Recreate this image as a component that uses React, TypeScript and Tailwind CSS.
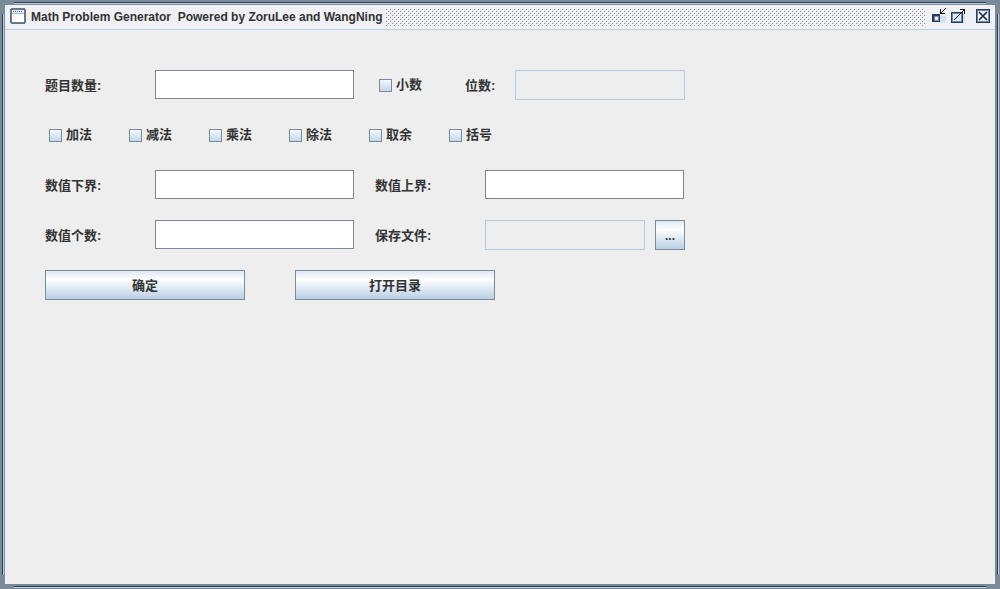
import React from 'react';

const operators = ['加法', '减法', '乘法', '除法', '取余', '括号'];

function FrameLines() {
  return (
    <div aria-hidden="true">
      <div className="absolute left-[14px] right-[14px] top-[2px] h-[2px] border-t border-[#2f3f52] bg-[#b8cfe5]" />
      <div className="absolute left-[14px] right-[14px] bottom-[1px] h-[2px] border-t border-[#2f3f52] bg-[#b8cfe5]" />
      <div className="absolute top-[14px] bottom-[14px] left-[2px] w-[2px] border-l border-[#2f3f52] bg-[#b8cfe5]" />
      <div className="absolute top-[14px] bottom-[14px] right-[1px] w-[2px] border-l border-[#2f3f52] bg-[#b8cfe5]" />
    </div>
  );
}

function WindowIcon() {
  return (
    <svg className="w-4 h-4 shrink-0" viewBox="0 0 16 16" shapeRendering="crispEdges" aria-hidden="true">
      <path fill="#687888" d="M1 0h14v1h1v14h-1v1H1v-1H0V1h1z" />
      <path fill="#e4eefa" d="M2 2h12v3H2z" />
      <path fill="#ffffff" d="M2 6h12v8H2z" />
      <path fill="#a3b8cc" d="M2 5h12v1H2z" />
      <path fill="#4a5a6c" d="M3 3h1v1H3zM5 3h1v1H5zM7 3h1v1H7zM9 3h1v1H9zM11 3h1v1h-1z" />
    </svg>
  );
}

function Bumps() {
  return (
    <svg className="h-[18px] min-w-0 flex-1" shapeRendering="crispEdges" aria-hidden="true">
      <defs>
        <pattern id="bumps" width="4" height="4" patternUnits="userSpaceOnUse">
          <path fill="#ffffff" d="M0 0h1v1H0zM2 2h1v1H2z" />
          <path fill="#7a8a99" d="M1 1h1v1H1zM3 3h1v1H3z" />
        </pattern>
      </defs>
      <rect width="100%" height="100%" fill="url(#bumps)" />
    </svg>
  );
}

function TitleButton({ label, children }: { label: string; children: React.ReactNode }) {
  return (
    <button type="button" aria-label={label} className="w-4 h-4 shrink-0">
      <svg className="w-4 h-4" viewBox="0 0 16 16" shapeRendering="crispEdges">
        {children}
      </svg>
    </button>
  );
}

function TitleBar() {
  return (
    <header className="flex h-[25px] items-start border-b border-[#b8cfe5] bg-[#f0f1f4] pl-[5px] pr-1 pt-[3px]">
      <WindowIcon />
      <h1 className="ml-[5px] mr-[2px] whitespace-pre text-[12px] leading-[18px] font-bold">
        {'Math Problem Generator  Powered by ZoruLee and WangNing'}
      </h1>
      <Bumps />
      <div className="ml-[5px] flex">
        <TitleButton label="Minimize">
          <path fill="#d3e0ef" d="M9 8h6v7H9z" />
          <path fill="#263a5e" d="M1 6h8v8H1z" />
          <path fill="#7187a6" d="M2 7h6v6H2z" />
          <path fill="#263a5e" d="M2 7h6v1H2zM2 7h1v6H2z" />
          <path fill="#f4f8fc" d="M4 9h3v3H4z" />
          <path fill="#111111" d="M9 1h1v5H9zM10 5h4v1h-4zM10 4h1v1h-1zM11 3h1v1h-1zM12 2h1v1h-1zM13 1h1v1h-1zM14 0h1v1h-1z" />
        </TitleButton>
        <span className="w-[3px]" />
        <TitleButton label="Maximize">
          <path fill="#d3e0ef" d="M12 6h3v9h-3z" />
          <path fill="#263a5e" d="M1 4h12v11H1z" />
          <path fill="#7187a6" d="M2 5h10v9H2z" />
          <path fill="#dfe9f5" d="M3 6h8v7H3z" />
          <path fill="#111111" d="M4 11h1v1H4zM5 10h1v1H5zM6 9h1v1H6zM7 8h1v1H7zM8 7h1v1H8zM9 6h1v1H9zM10 5h1v1h-1zM11 4h1v1h-1zM12 3h1v1h-1zM13 2h1v1h-1zM10 1h5v1h-5zM14 2h1v4h-1z" />
        </TitleButton>
        <span className="w-[9px]" />
        <TitleButton label="Close">
          <path fill="#263a5e" d="M1 1h14v14H1z" />
          <path fill="#7187a6" d="M2 2h12v12H2z" />
          <path fill="#e8f0f8" d="M3 3h10v10H3z" />
          <path fill="none" stroke="#1c2638" strokeWidth="1.6" shapeRendering="auto" d="M4 4l8 8M12 4l-8 8" />
        </TitleButton>
      </div>
    </header>
  );
}

function TextField({ id, width, disabled }: { id: string; width: string; disabled?: boolean }) {
  const look = disabled
    ? 'h-[30px] border border-[#b8c9dc] bg-[#eeeeee]'
    : 'h-[29px] border border-[#7f868e] bg-white';
  return <input id={id} type="text" disabled={disabled} className={`${look} ${width} px-1 outline-none`} />;
}

function FieldLabel({ htmlFor, width, children }: { htmlFor: string; width: string; children: React.ReactNode }) {
  return (
    <label htmlFor={htmlFor} className={`leading-8 ${width}`}>
      {children}
    </label>
  );
}

function CheckBox({ label, width }: { label: string; width: string }) {
  return (
    <label className={`flex h-[30px] items-center gap-1 pl-1 ${width}`}>
      <input
        type="checkbox"
        className="h-[13px] w-[13px] shrink-0 appearance-none border border-[#7a8a99] bg-linear-to-b from-[#f4f8fc] to-[#c3d6e9] checked:bg-[#7a8a99]"
      />
      <span className="leading-8">{label}</span>
    </label>
  );
}

function PushButton({ children, width }: { children: React.ReactNode; width: string }) {
  return (
    <button
      type="button"
      className={`h-[30px] border border-[#7a8a99] bg-linear-to-b from-[#dde8f3] via-white via-30% to-[#b8cfe5] pt-px text-center ${width}`}
    >
      {children}
    </button>
  );
}

export default function App() {
  return (
    <div className="relative flex min-h-screen flex-col bg-[#7a8a99] p-[5px] font-['Liberation_Sans','Noto_Sans_CJK_SC',sans-serif] text-[#333333]">
      <FrameLines />
      <TitleBar />
      <main className="flex-1 bg-[#eeeeee] px-10 pt-10">
        <form className="flex flex-col gap-5 text-[13px] leading-5 font-bold">
          <div className="flex h-[30px]">
            <FieldLabel htmlFor="count" width="w-[110px]">题目数量:</FieldLabel>
            <TextField id="count" width="w-[199px]" />
            <div className="w-[21px]" />
            <CheckBox label="小数" width="w-[90px]" />
            <FieldLabel htmlFor="digits" width="w-[50px]">位数:</FieldLabel>
            <TextField id="digits" width="w-[170px]" disabled />
          </div>

          <div className="flex h-[30px]">
            {operators.map((name) => (
              <CheckBox key={name} label={name} width="w-[80px]" />
            ))}
          </div>

          <div className="flex h-[30px]">
            <FieldLabel htmlFor="lower" width="w-[110px]">数值下界:</FieldLabel>
            <TextField id="lower" width="w-[199px]" />
            <div className="w-[21px]" />
            <FieldLabel htmlFor="upper" width="w-[110px]">数值上界:</FieldLabel>
            <TextField id="upper" width="w-[199px]" />
          </div>

          <div className="flex h-[30px]">
            <FieldLabel htmlFor="terms" width="w-[110px]">数值个数:</FieldLabel>
            <TextField id="terms" width="w-[199px]" />
            <div className="w-[21px]" />
            <FieldLabel htmlFor="file" width="w-[110px]">保存文件:</FieldLabel>
            <TextField id="file" width="w-[160px]" disabled />
            <div className="w-[10px]" />
            <PushButton width="w-[30px] text-[12px]">...</PushButton>
          </div>

          <div className="flex gap-[50px]">
            <PushButton width="w-[200px]">确定</PushButton>
            <PushButton width="w-[200px]">打开目录</PushButton>
          </div>
        </form>
      </main>
    </div>
  );
}
